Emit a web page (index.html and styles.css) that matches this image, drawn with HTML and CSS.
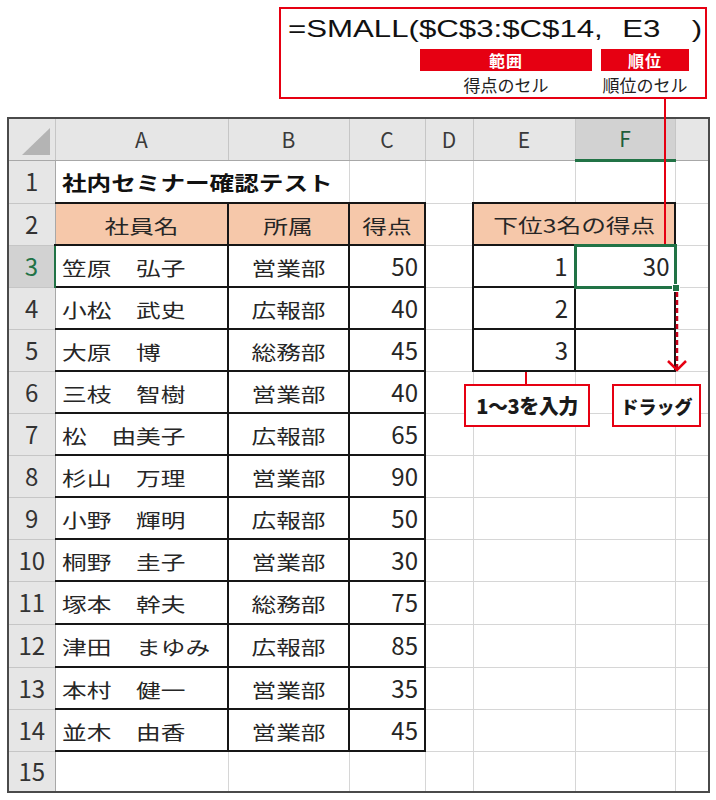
FILE: index.html
```html
<!DOCTYPE html>
<html lang="ja">
<head>
<meta charset="utf-8">
<title>SMALL関数</title>
<link rel="stylesheet" href="styles.css">
</head>
<body>
<div class="page">
  <div class="callout">
    <div class="formula"><span class="f-text">=SMALL($C$3:$C$14,<span class="f-arg">E3</span><span class="f-close">)</span></span></div>
    <div class="args">
      <div class="arg arg-range"><div class="tag">範囲</div><div class="cap">得点のセル</div></div>
      <div class="arg arg-rank"><div class="tag">順位</div><div class="cap">順位のセル</div></div>
    </div>
  </div>

  <div class="sheet-wrap">
    <table class="sheet">
      <colgroup>
        <col class="c-rh"><col class="c-a"><col class="c-b"><col class="c-c"><col class="c-d"><col class="c-e"><col class="c-f"><col class="c-g">
      </colgroup>
      <tr class="r-head">
        <th class="corner"><svg class="tri" width="28" height="27" viewBox="0 0 28 27"><polygon points="0,27 28,27 28,0" fill="#b4b4b4"/></svg></th>
        <th class="col">A</th><th class="col">B</th><th class="col">C</th><th class="col">D</th><th class="col">E</th><th class="col col-sel">F</th><th class="col col-last"></th>
      </tr>
      <tr class="r1">
        <th class="row">1</th>
        <td class="l title" colspan="2"><span class="j jb">社内セミナー確認テスト</span></td>
        <td></td><td></td><td></td><td></td><td></td>
      </tr>
      <tr class="r2">
        <th class="row">2</th>
        <td class="c tb first hdr"><span class="j">社員名</span></td>
        <td class="c tb hdr"><span class="j">所属</span></td>
        <td class="c tb hdr"><span class="j">得点</span></td>
        <td></td>
        <td class="c tb hdr" colspan="2"><span class="j">下位3名の得点</span></td>
        <td></td>
      </tr>
      <tr class="r3">
        <th class="row row-sel">3</th>
        <td class="l tb first"><span class="j">笠原　弘子</span></td>
        <td class="c tb"><span class="j">営業部</span></td>
        <td class="r tb">50</td>
        <td></td>
        <td class="r tb">1</td>
        <td class="r sel">30</td>
        <td></td>
      </tr>
      <tr class="r4">
        <th class="row">4</th>
        <td class="l tb first"><span class="j">小松　武史</span></td>
        <td class="c tb"><span class="j">広報部</span></td>
        <td class="r tb">40</td>
        <td></td>
        <td class="r tb">2</td>
        <td class="r tb"></td>
        <td></td>
      </tr>
      <tr class="r5">
        <th class="row">5</th>
        <td class="l tb first"><span class="j">大原　博</span></td>
        <td class="c tb"><span class="j">総務部</span></td>
        <td class="r tb">45</td>
        <td></td>
        <td class="r tb">3</td>
        <td class="r tb"></td>
        <td></td>
      </tr>
      <tr class="r6">
        <th class="row">6</th>
        <td class="l tb first"><span class="j">三枝　智樹</span></td>
        <td class="c tb"><span class="j">営業部</span></td>
        <td class="r tb">40</td>
        <td></td><td></td><td></td><td></td>
      </tr>
      <tr class="r7">
        <th class="row">7</th>
        <td class="l tb first"><span class="j">松　由美子</span></td>
        <td class="c tb"><span class="j">広報部</span></td>
        <td class="r tb">65</td>
        <td></td><td></td><td></td><td></td>
      </tr>
      <tr class="r8">
        <th class="row">8</th>
        <td class="l tb first"><span class="j">杉山　万理</span></td>
        <td class="c tb"><span class="j">営業部</span></td>
        <td class="r tb">90</td>
        <td></td><td></td><td></td><td></td>
      </tr>
      <tr class="r9">
        <th class="row">9</th>
        <td class="l tb first"><span class="j">小野　輝明</span></td>
        <td class="c tb"><span class="j">広報部</span></td>
        <td class="r tb">50</td>
        <td></td><td></td><td></td><td></td>
      </tr>
      <tr class="r10">
        <th class="row">10</th>
        <td class="l tb first"><span class="j">桐野　圭子</span></td>
        <td class="c tb"><span class="j">営業部</span></td>
        <td class="r tb">30</td>
        <td></td><td></td><td></td><td></td>
      </tr>
      <tr class="r11">
        <th class="row">11</th>
        <td class="l tb first"><span class="j">塚本　幹夫</span></td>
        <td class="c tb"><span class="j">総務部</span></td>
        <td class="r tb">75</td>
        <td></td><td></td><td></td><td></td>
      </tr>
      <tr class="r12">
        <th class="row">12</th>
        <td class="l tb first"><span class="j">津田　まゆみ</span></td>
        <td class="c tb"><span class="j">広報部</span></td>
        <td class="r tb">85</td>
        <td></td><td></td><td></td><td></td>
      </tr>
      <tr class="r13">
        <th class="row">13</th>
        <td class="l tb first"><span class="j">本村　健一</span></td>
        <td class="c tb"><span class="j">営業部</span></td>
        <td class="r tb">35</td>
        <td></td><td></td><td></td><td></td>
      </tr>
      <tr class="r14">
        <th class="row">14</th>
        <td class="l tb first"><span class="j">並木　由香</span></td>
        <td class="c tb"><span class="j">営業部</span></td>
        <td class="r tb">45</td>
        <td></td><td></td><td></td><td></td>
      </tr>
      <tr class="r15">
        <th class="row row-last">15</th>
        <td></td><td></td><td></td><td></td><td></td><td></td><td></td>
      </tr>
    </table>
  </div>

  <div class="note note-input">1～3を入力</div>
  <div class="note note-drag">ドラッグ</div>

  <svg class="overlay" width="716" height="800" viewBox="0 0 716 800">
    <line x1="665" y1="99" x2="665" y2="244" stroke="#e60012" stroke-width="2"/>
    <line x1="526" y1="372" x2="526" y2="385" stroke="#e60012" stroke-width="2"/>
    <line x1="677" y1="292" x2="677" y2="369" stroke="#c8001a" stroke-width="2.5" stroke-dasharray="5 3"/>
    <polyline points="668,361 677,370 686,361" fill="none" stroke="#e60012" stroke-width="2.5"/>
    <rect x="672.5" y="284.5" width="7" height="7" fill="#217346" stroke="#fff" stroke-width="1"/>
  </svg>
</div>
</body>
</html>
```

FILE: styles.css
```css
* { box-sizing: border-box; }

html, body {
  margin: 0;
  padding: 0;
  background: #ffffff;
}

body {
  font-family: "Noto Sans CJK JP", "Noto Sans", sans-serif;
  color: #222;
}

.page {
  position: relative;
  width: 716px;
  height: 800px;
  overflow: hidden;
  padding-top: 7px;
}

/* ---------- formula callout ---------- */
.callout {
  margin-left: 279px;
  width: 428px;
  height: 92px;
  border: 2px solid #e60012;
  display: flex;
  flex-direction: column;
}

.formula {
  margin-top: 8px;
  padding-left: 7px;
  height: 24px;
  line-height: 24px;
  white-space: nowrap;
}

.f-text {
  display: inline-block;
  font-family: "Liberation Sans", Arial, sans-serif;
  font-size: 24px;
  color: #111;
  transform: scaleX(1.3);
  transform-origin: left center;
}

.f-arg { margin-left: 15px; }
.f-close { margin-left: 24px; }

.args {
  display: flex;
  margin-top: 8px;
  margin-left: 139px;
  gap: 9px;
}

.arg {
  display: flex;
  flex-direction: column;
  align-items: center;
}

.arg-range { width: 172px; }
.arg-rank { width: 88px; }

.tag {
  width: 100%;
  height: 22px;
  line-height: 22px;
  background: #e60012;
  color: #fff;
  text-align: center;
  font-size: 16px;
  font-weight: bold;
  letter-spacing: 1px;
}

.cap {
  margin-top: 2px;
  line-height: 24px;
  font-size: 17px;
  color: #222;
  white-space: nowrap;
}

/* ---------- sheet ---------- */
.sheet-wrap {
  margin-top: 18px;
  margin-left: 7px;
  width: 703px;
  border: 2px solid #4a4a4a;
}

.sheet {
  width: 699px;
  table-layout: fixed;
  border-collapse: collapse;
  border-style: hidden;
}

.c-rh { width: 46px; }
.c-a { width: 173px; }
.c-b { width: 121px; }
.c-c { width: 76px; }
.c-d { width: 48px; }
.c-e { width: 102px; }
.c-f { width: 100px; }
.c-g { width: 33px; }

.r-head { height: 41px; }
.r1 { height: 43px; }
.r2, .r3, .r4, .r5, .r6, .r7, .r8, .r9, .r10, .r13, .r14 { height: 42px; }
.r11, .r12 { height: 43px; }
.r15 { height: 40px; }

td, th {
  padding: 0;
  border: 1px solid #d6d6d6;
  vertical-align: middle;
  line-height: 1.2;
  white-space: nowrap;
  overflow: visible;
}

td {
  font-size: 24px;
  color: #262626;
}

th {
  font-weight: normal;
  background: #e6e6e6;
  color: #333;
}

th.col {
  font-size: 21px;
  text-align: center;
  border-right: 1px solid #c6c6c6;
  border-bottom: 1px solid #a8a8a8;
  color: #3a3a3a;
}

th.col-sel {
  background: #d2d2d2;
  color: #1e5e3a;
  border-bottom: 3px solid #217346;
}

th.corner {
  text-align: right;
  vertical-align: bottom;
  padding: 0 5px 5px 0;
  border-right: 1px solid #c6c6c6;
  border-bottom: 1px solid #a8a8a8;
}

.tri { display: block; margin-left: auto; }

th.row {
  font-size: 24px;
  text-align: center;
  border-bottom: 1px solid #c6c6c6;
  border-right: 1px solid #a8a8a8;
}

th.row-sel {
  background: #d2d2d2;
  color: #217346;
  border-right: 2px solid #217346;
}

/* cell alignment */
.l { text-align: left; padding-left: 6px; }
.c { text-align: center; }
.r { text-align: right; padding-right: 6px; }

.j {
  display: inline-block;
  font-size: 19px;
  transform: scaleX(1.3);
}
.l .j { transform-origin: left center; }
.c .j { transform-origin: center center; }

.jb {
  font-size: 20px;
  font-weight: bold;
  color: #111;
  transform: scaleX(1.23);
}

.title { border-top-color: #d6d6d6; }

/* bordered tables */
.tb { border: 2px solid #161616; }
.tb.first { border-left: 1px solid #d6d6d6; }
.hdr { background: #f6c8aa; }

.sel {
  border: 3px solid #217346;
  padding-right: 4px;
}

/* ---------- notes ---------- */
.note {
  position: absolute;
  top: 384px;
  height: 43px;
  border: 2px solid #e60012;
  background: #fff;
  display: flex;
  align-items: center;
  justify-content: center;
  font-size: 20px;
  font-weight: 900;
  color: #1a1a1a;
  white-space: nowrap;
}

.note-input { left: 464px; width: 126px; letter-spacing: -0.5px; }
.note-drag { left: 612px; width: 89px; font-size: 18px; }

.overlay {
  position: absolute;
  left: 0;
  top: 0;
  pointer-events: none;
}
```
